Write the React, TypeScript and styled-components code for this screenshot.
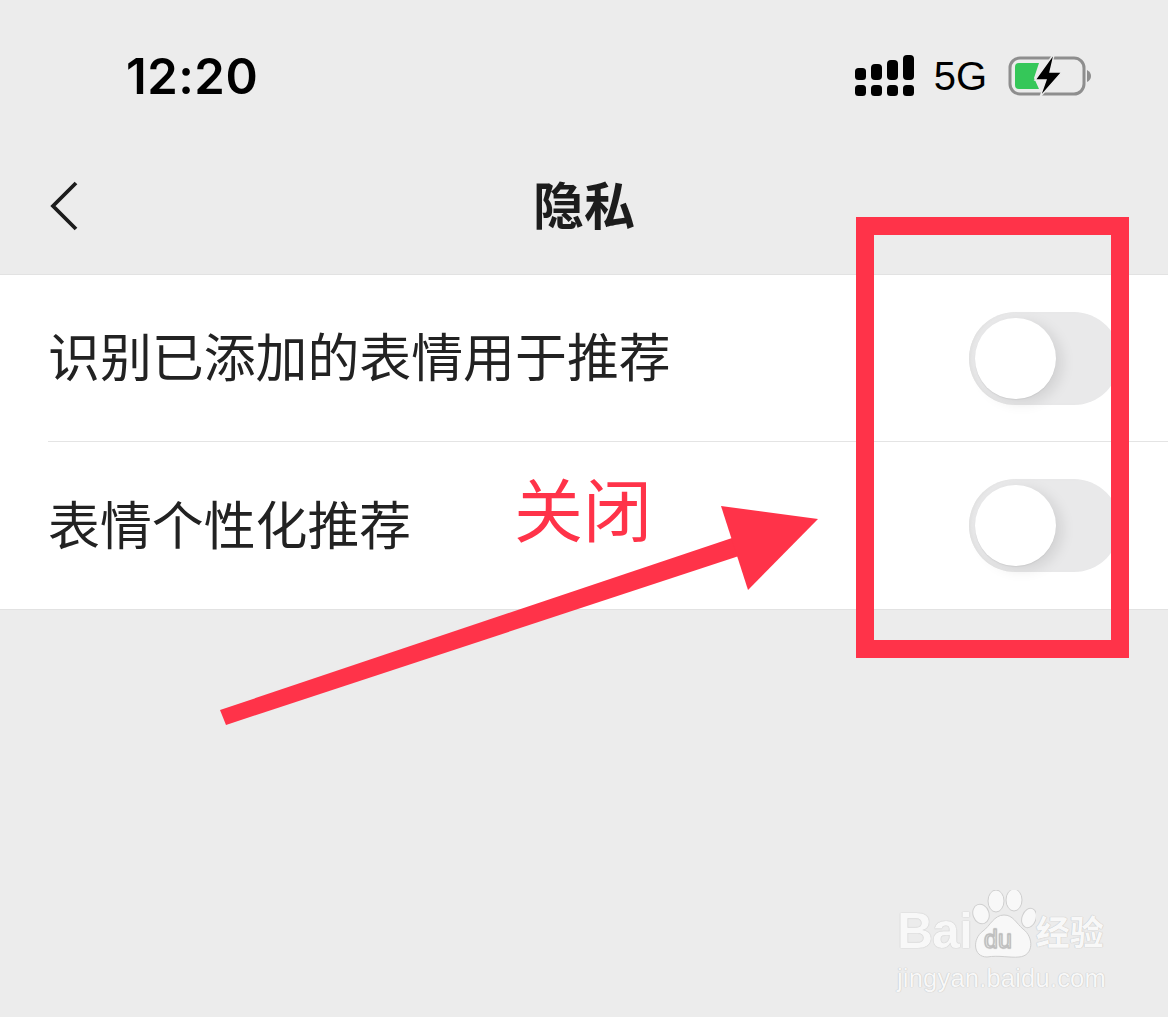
import React from "react";
import styled, { createGlobalStyle } from "styled-components";

const CJK = `"Noto Sans CJK SC", "Noto Sans", sans-serif`;
const RED = "#ff3349";

const GlobalStyle = createGlobalStyle`
  html, body {
    margin: 0;
    padding: 0;
    background: #ececec;
  }
`;

const Screen = styled.div`
  position: relative;
  width: 1168px;
  height: 1017px;
  overflow: hidden;
  background: #ececec;
  font-family: ${CJK};
`;

const StatusBar = styled.div`
  height: 152px;
  box-sizing: border-box;
  padding: 0 77px 0 126px;
  display: flex;
  align-items: center;
  justify-content: space-between;
  color: #000;
`;

const Clock = styled.span`
  font-family: Inter, "Liberation Sans", sans-serif;
  font-size: 49px;
  font-weight: 600;
  letter-spacing: 0.5px;
`;

const StatusRight = styled.div`
  display: flex;
  align-items: center;
`;

const Network = styled.span`
  font-family: "Liberation Sans", sans-serif;
  font-size: 40px;
  margin: 0 20px 0 19px;
`;

const NavBar = styled.div`
  height: 123px;
  box-sizing: border-box;
  padding: 0 0 14px 49px;
  display: flex;
  align-items: center;
  position: relative;
  border-bottom: 1px solid #e2e2e2;
`;

const NavTitle = styled.div`
  flex: 1;
  margin-right: 79px;
  padding-bottom: 6px;
  text-align: center;
  font-size: 51px;
  line-height: 60px;
  font-weight: 700;
  color: #1c1c1c;
`;

const List = styled.div`
  background: #fff;
  border-bottom: 1px solid #e2e2e2;
  padding-left: 48px;
`;

const Row = styled.div<{ $last?: boolean }>`
  height: 167px;
  box-sizing: border-box;
  padding-right: 48px;
  display: flex;
  align-items: center;
  justify-content: space-between;
  border-bottom: ${(p) => (p.$last ? "none" : "1px solid #e4e4e4")};
`;

const RowLabel = styled.span`
  font-size: 51.9px;
  line-height: 64px;
  padding-bottom: 6px;
  font-weight: 400;
  color: #222;
`;

const Toggle = styled.div`
  width: 151px;
  height: 93px;
  box-sizing: border-box;
  padding: 6px;
  border-radius: 47px;
  background: #e9e9ea;
  box-shadow: inset 3px 0 3px -1px #e0e0e0;
`;

const Knob = styled.div`
  width: 81px;
  height: 81px;
  border-radius: 50%;
  background: #fff;
  box-shadow: 6px 4px 14px rgba(0, 0, 0, 0.1), 0 1px 1px rgba(0, 0, 0, 0.06);
`;

const Highlight = styled.div`
  position: absolute;
  left: 856px;
  top: 217px;
  width: 273px;
  height: 441px;
  box-sizing: border-box;
  border: 18px solid ${RED};
`;

const ArrowLayer = styled.svg`
  position: absolute;
  left: 0;
  top: 0;
`;

const Note = styled.div`
  position: absolute;
  left: 514px;
  top: 462px;
  font-size: 69px;
  line-height: 90px;
  font-weight: 400;
  color: ${RED};
`;

const Watermark = styled.div`
  position: absolute;
  left: 897px;
  top: 890px;
  width: 210px;
  color: #f8f8f8;
  text-shadow: 0 0 1px #c4c4c4, 0 0 1px #c4c4c4;
`;

const MarkTop = styled.div`
  display: flex;
  align-items: flex-end;
  height: 70px;
`;

const MarkLatin = styled.span`
  font-family: "Liberation Sans", sans-serif;
  font-size: 50px;
  line-height: 58px;
  font-weight: 700;
  letter-spacing: -1px;
`;

const MarkCjk = styled.span`
  font-size: 34px;
  line-height: 58px;
  font-weight: 700;
`;

const MarkUrl = styled.div`
  font-family: "Liberation Sans", sans-serif;
  font-size: 25.5px;
  line-height: 32px;
  margin-top: 2px;
  white-space: nowrap;
  letter-spacing: 0.2px;
`;

const Signal = () => (
  <svg width="60" height="42" viewBox="0 0 60 42">
    <g fill="#000">
      <rect x="0" y="30" width="11" height="11" rx="3.5" />
      <rect x="16" y="30" width="11" height="11" rx="3.5" />
      <rect x="32" y="30" width="11" height="11" rx="3.5" />
      <rect x="48" y="30" width="11" height="11" rx="3.5" />
      <rect x="0" y="13" width="11" height="12" rx="3.5" />
      <rect x="16" y="9" width="11" height="16" rx="4" />
      <rect x="32" y="5" width="11" height="20" rx="4" />
      <rect x="48" y="0" width="11" height="25" rx="4" />
    </g>
  </svg>
);

const Battery = () => (
  <svg width="84" height="44" viewBox="0 0 84 44">
    <rect x="3" y="4" width="74" height="36" rx="10" fill="none" stroke="#8e8e8e" strokeWidth="3" />
    <path d="M80 16 q4 2 4 6 q0 4 -4 6 z" fill="#8e8e8e" />
    <path d="M12 9 H32 L27 24 L32 35 H12 Q8 35 8 31 V13 Q8 9 12 9 Z" fill="#35c759" />
    <path d="M46 1 L28 26 H39 L33 43 L55 18 H43 L47 1 Z" fill="#000" stroke="#ececec" strokeWidth="1.4" />
  </svg>
);

const BackIcon = () => (
  <svg width="30" height="52" viewBox="0 0 30 52">
    <path d="M27 3 L4 26 L27 49" fill="none" stroke="#1c1c1c" strokeWidth="3.8" />
  </svg>
);

const Paw = () => (
  <svg width="64" height="70" viewBox="0 0 64 70">
    <g fill="#f8f8f8" stroke="#cfcfcf" strokeWidth="1">
      <ellipse cx="9" cy="24" rx="8" ry="10" transform="rotate(-20 9 24)" />
      <ellipse cx="24" cy="11" rx="8" ry="11" />
      <ellipse cx="42" cy="10" rx="8" ry="11" />
      <ellipse cx="57" cy="28" rx="7" ry="10" transform="rotate(20 57 28)" />
      <path d="M32 25 C41 25 44 33 51 39 C62 47 62 66 47 67 C38 68 27 65 15 67 C1 67 0 49 11 41 C18 36 22 25 32 25 Z" />
    </g>
    <text x="12" y="58" fontFamily="Liberation Sans, sans-serif" fontSize="25" fill="#f8f8f8" stroke="#bdbdbd" strokeWidth="0.9">
      du
    </text>
  </svg>
);

const App: React.FC = () => {
  return (
    <Screen>
      <GlobalStyle />
      <StatusBar>
        <Clock>12:20</Clock>
        <StatusRight>
          <Signal />
          <Network>5G</Network>
          <Battery />
        </StatusRight>
      </StatusBar>

      <NavBar>
        <BackIcon />
        <NavTitle>隐私</NavTitle>
      </NavBar>

      <List>
        <Row>
          <RowLabel>识别已添加的表情用于推荐</RowLabel>
          <Toggle>
            <Knob />
          </Toggle>
        </Row>
        <Row $last>
          <RowLabel>表情个性化推荐</RowLabel>
          <Toggle>
            <Knob />
          </Toggle>
        </Row>
      </List>

      <Highlight />
      <ArrowLayer width="1168" height="1017" viewBox="0 0 1168 1017">
        <polygon points="220,710 226,725 745,554 738,536" fill={RED} />
        <polygon points="721,506 818,519 748,590" fill={RED} />
      </ArrowLayer>
      <Note>关闭</Note>

      <Watermark>
        <MarkTop>
          <MarkLatin>Bai</MarkLatin>
          <Paw />
          <MarkCjk>经验</MarkCjk>
        </MarkTop>
        <MarkUrl>jingyan.baidu.com</MarkUrl>
      </Watermark>
    </Screen>
  );
};

export default App;
